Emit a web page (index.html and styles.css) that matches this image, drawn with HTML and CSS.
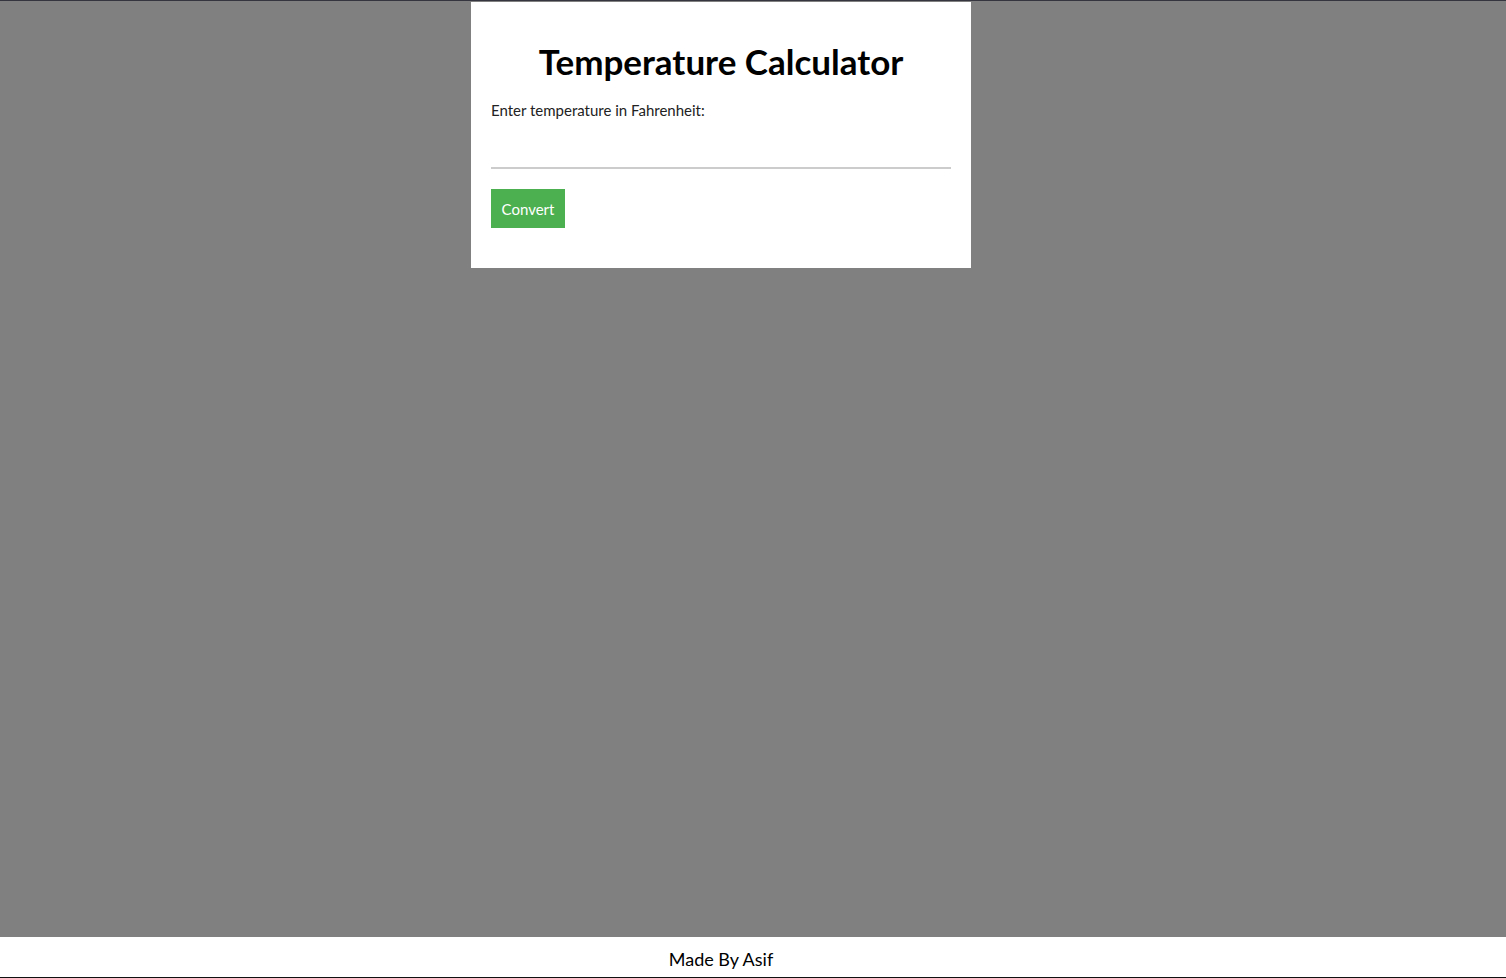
FILE: index.html
```html
<!DOCTYPE html>
<html lang="en">
<head>
<meta charset="utf-8">
<title>Temperature Calculator</title>
<link rel="stylesheet" href="styles.css">
</head>
<body>
<div class="page">
  <main class="main">
    <div class="card">
      <h1 class="title">Temperature Calculator</h1>
      <label class="label" for="temp">Enter temperature in Fahrenheit:</label>
      <input class="input" id="temp" type="text">
      <button class="btn" type="button">Convert</button>
    </div>
  </main>
  <footer class="footer">Made By Asif</footer>
</div>
</body>
</html>
```
FILE: styles.css
```css
html, body {
  margin: 0;
  padding: 0;
  height: 100%;
}
body {
  font-family: Lato, "Open Sans", sans-serif;
  background: #808080;
  color: #000;
}
.page {
  height: 978px;
  box-sizing: border-box;
  border-top: 1px solid #35353f;
  border-bottom: 1px solid #111;
  display: flex;
  flex-direction: column;
}
.main {
  flex: 1;
  display: flex;
  justify-content: center;
  align-items: flex-start;
  padding: 1px 64px 0 0;
}
.card {
  width: 500px;
  box-sizing: border-box;
  background: #fff;
  padding: 20px 20px 40px;
  display: flex;
  flex-direction: column;
  align-items: flex-start;
}
.title {
  align-self: stretch;
  text-align: center;
  font-size: 35px;
  font-weight: 700;
  margin: 23px 0 24px;
  line-height: 32px;
}
.label {
  font-size: 15px;
  color: #222;
  line-height: 18px;
}
.input {
  align-self: stretch;
  border: none;
  border-bottom: 2px solid #ccc;
  height: 40px;
  margin-top: 8px;
  padding: 0;
  outline: none;
  font-size: 16px;
  font-family: inherit;
}
.btn {
  margin-top: 20px;
  background: #4caf50;
  color: #fff;
  border: none;
  width: 74px;
  height: 39px;
  font-family: inherit;
  font-size: 15px;
  padding: 0;
}
.footer {
  height: 40px;
  box-sizing: border-box;
  background: #fff;
  display: flex;
  align-items: center;
  justify-content: center;
  padding: 3px 64px 0 0;
  font-size: 18px;
}
```
